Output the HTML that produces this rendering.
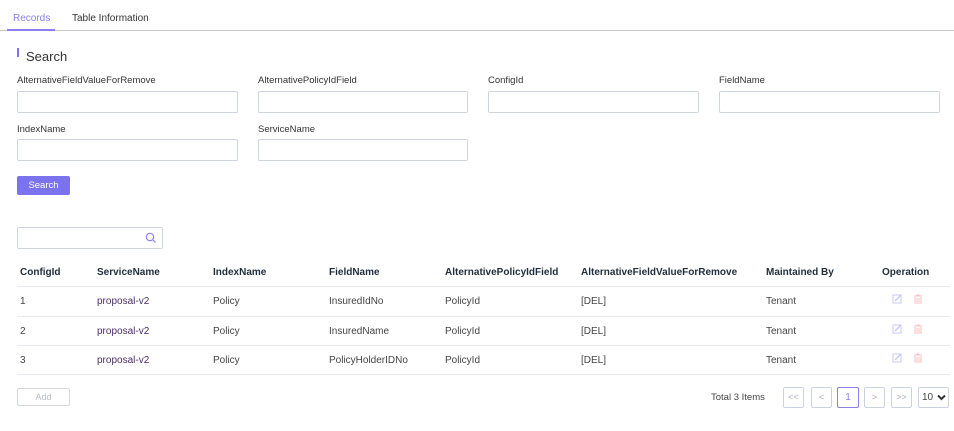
<!DOCTYPE html>
<html><head><style>
*{box-sizing:border-box;margin:0;padding:0}
body{width:954px;height:431px;background:#fff;font-family:"Liberation Sans",sans-serif;font-size:10px;color:#333;position:relative;overflow:hidden}
.a{position:absolute}
.inp{position:absolute;height:22px;border:1px solid #cfd3dc;border-radius:2px;background:#fff}
.lbl{position:absolute;font-size:9.5px;color:#333}
.th{position:absolute;top:267px;font-weight:bold;color:#1f2d3d;font-size:10px}
.td{position:absolute;font-size:10px;color:#444}
.hl{position:absolute;left:17px;width:933px;height:1px;background:#e6e8ee}
.pg{position:absolute;top:387px;height:21px;border:1px solid #cdd2e0;border-radius:2px;color:#aab;font-size:9px;text-align:center;line-height:19px}
</style></head><body>
<div class="a" style="left:13px;top:13px;color:#8a80ee;font-size:10px">Records</div>
<div class="a" style="left:72px;top:13px;color:#333;font-size:10px">Table Information</div>
<div class="a" style="left:0;top:30px;width:954px;height:1px;background:#c8c8cc"></div>
<div class="a" style="left:7px;top:29px;width:48px;height:2px;background:#8a80ee"></div>
<div class="a" style="left:17px;top:48px;width:2px;height:9px;background:#7b72ee"></div>
<div class="a" style="left:26px;top:49px;font-size:13px;color:#333">Search</div>
<div class="lbl" style="left:17px;top:75px">AlternativeFieldValueForRemove</div>
<div class="lbl" style="left:258px;top:75px">AlternativePolicyIdField</div>
<div class="lbl" style="left:488px;top:75px">ConfigId</div>
<div class="lbl" style="left:719px;top:75px">FieldName</div>
<div class="inp" style="left:17px;top:91px;width:221px"></div>
<div class="inp" style="left:258px;top:91px;width:210px"></div>
<div class="inp" style="left:488px;top:91px;width:211px"></div>
<div class="inp" style="left:719px;top:91px;width:221px"></div>
<div class="lbl" style="left:17px;top:124px">IndexName</div>
<div class="lbl" style="left:258px;top:124px">ServiceName</div>
<div class="inp" style="left:17px;top:139px;width:221px"></div>
<div class="inp" style="left:258px;top:139px;width:210px"></div>
<div class="a" style="left:17px;top:176px;width:53px;height:19px;background:#7b72ee;border-radius:2px;color:#fff;font-size:9.5px;text-align:center;line-height:19px">Search</div>
<div class="inp" style="left:17px;top:227px;width:146px"></div>
<svg class="a" style="left:145px;top:232px" width="12" height="12" viewBox="0 0 12 12"><circle cx="5" cy="5" r="3.7" fill="none" stroke="#8a80ee" stroke-width="1.2"/><path d="M8 8L10.5 10.5" stroke="#8a80ee" stroke-width="1.2"/></svg>
<div class="th" style="left:20px">ConfigId</div>
<div class="th" style="left:97px">ServiceName</div>
<div class="th" style="left:213px">IndexName</div>
<div class="th" style="left:329px">FieldName</div>
<div class="th" style="left:445px">AlternativePolicyIdField</div>
<div class="th" style="left:581px">AlternativeFieldValueForRemove</div>
<div class="th" style="left:766px">Maintained By</div>
<div class="th" style="left:882px">Operation</div>
<div class="hl" style="top:286px"></div>
<div class="hl" style="top:316px"></div>
<div class="hl" style="top:345px"></div>
<div class="hl" style="top:374px"></div>

<div class="td" style="left:20px;top:296px">1</div><div class="td" style="left:97px;top:296px;color:#4a2d6a">proposal-v2</div><div class="td" style="left:213px;top:296px">Policy</div><div class="td" style="left:329px;top:296px">InsuredIdNo</div><div class="td" style="left:445px;top:296px">PolicyId</div><div class="td" style="left:581px;top:296px">[DEL]</div><div class="td" style="left:766px;top:296px">Tenant</div>
<div class="td" style="left:20px;top:326px">2</div><div class="td" style="left:97px;top:326px;color:#4a2d6a">proposal-v2</div><div class="td" style="left:213px;top:326px">Policy</div><div class="td" style="left:329px;top:326px">InsuredName</div><div class="td" style="left:445px;top:326px">PolicyId</div><div class="td" style="left:581px;top:326px">[DEL]</div><div class="td" style="left:766px;top:326px">Tenant</div>
<div class="td" style="left:20px;top:355px">3</div><div class="td" style="left:97px;top:355px;color:#4a2d6a">proposal-v2</div><div class="td" style="left:213px;top:355px">Policy</div><div class="td" style="left:329px;top:355px">PolicyHolderIDNo</div><div class="td" style="left:445px;top:355px">PolicyId</div><div class="td" style="left:581px;top:355px">[DEL]</div><div class="td" style="left:766px;top:355px">Tenant</div>

<svg class="a" style="left:892px;top:293px" width="40" height="70" viewBox="0 0 40 70">
<g id="r"><rect x="1" y="2" width="8" height="8" fill="none" stroke="#c8c8f4" stroke-width="1"/><path d="M3 8L8.5 2.5" stroke="#c8c8f4" stroke-width="1.3"/>
<path d="M22 3h8M25 3v-1h2v1M23 4v6h6v-6M25 5v4M27 5v4" fill="none" stroke="#f8c0c0" stroke-width="1"/></g>
<use href="#r" y="30"/><use href="#r" y="59"/>
</svg>

<div class="a" style="left:17px;top:388px;width:53px;height:18px;border:1px solid #d4d7e0;border-radius:2px;color:#bbc;font-size:9px;text-align:center;line-height:16px">Add</div>
<div class="a" style="left:711px;top:392px;font-size:9.5px;color:#444">Total 3 Items</div>
<div class="pg" style="left:783px;width:21px">&lt;&lt;</div>
<div class="pg" style="left:811px;width:21px">&lt;</div>
<div class="pg" style="left:837px;width:22px;border-color:#8a80ee;color:#8a80ee;font-size:10px">1</div>
<div class="pg" style="left:864px;width:21px">&gt;</div>
<div class="pg" style="left:891px;width:21px">&gt;&gt;</div>
<div class="pg" style="left:918px;width:31px;color:#444;font-size:10px;text-align:left;padding-left:3px">10<svg style="position:absolute;left:18px;top:6px" width="9" height="7" viewBox="0 0 9 7"><path d="M1 1.5L4.5 5 8 1.5" fill="none" stroke="#333" stroke-width="2"/></svg></div>
</body></html>
